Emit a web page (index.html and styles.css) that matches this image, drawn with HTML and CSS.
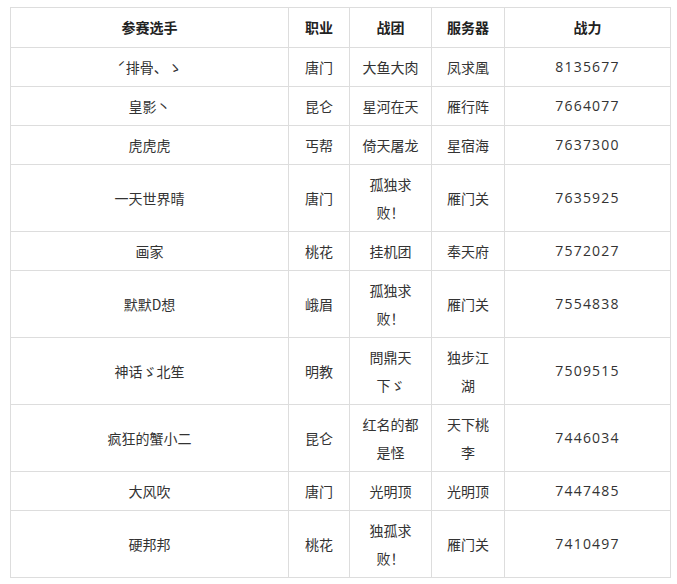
FILE: index.html
```html
<!DOCTYPE html>
<html lang="zh-CN">
<head>
<meta charset="utf-8">
<link rel="stylesheet" href="styles.css">
</head>
<body>
<table class="rank">
  <colgroup>
    <col class="c1"><col class="c2"><col class="c3"><col class="c4"><col class="c5">
  </colgroup>
  <thead>
    <tr><th>参赛选手</th><th>职业</th><th>战团</th><th>服务器</th><th>战力</th></tr>
  </thead>
  <tbody>
    <tr><td>ˊ排骨、ゝ</td><td>唐门</td><td>大鱼大肉</td><td>凤求凰</td><td class="num">8135677</td></tr>
    <tr><td>皇影丶</td><td>昆仑</td><td>星河在天</td><td>雁行阵</td><td class="num">7664077</td></tr>
    <tr><td>虎虎虎</td><td>丐帮</td><td>倚天屠龙</td><td>星宿海</td><td class="num">7637300</td></tr>
    <tr><td>一天世界晴</td><td>唐门</td><td>孤独求败！</td><td>雁门关</td><td class="num">7635925</td></tr>
    <tr><td>画家</td><td>桃花</td><td>挂机团</td><td>奉天府</td><td class="num">7572027</td></tr>
    <tr><td>默默D想</td><td>峨眉</td><td>孤独求败！</td><td>雁门关</td><td class="num">7554838</td></tr>
    <tr><td>神话ゞ北笙</td><td>明教</td><td>問鼎天下ゞ</td><td>独步江湖</td><td class="num">7509515</td></tr>
    <tr><td>疯狂的蟹小二</td><td>昆仑</td><td>红名的都是怪</td><td>天下桃李</td><td class="num">7446034</td></tr>
    <tr><td>大风吹</td><td>唐门</td><td>光明顶</td><td>光明顶</td><td class="num">7447485</td></tr>
    <tr><td>硬邦邦</td><td>桃花</td><td>独孤求败！</td><td>雁门关</td><td class="num">7410497</td></tr>
  </tbody>
</table>
</body>
</html>
```
FILE: styles.css
```css
html, body {
  margin: 0;
  padding: 0;
  background: #ffffff;
}
body {
  padding: 7px 0 0 10px;
  font-family: "Noto Sans CJK SC", "Noto Sans", sans-serif;
  font-size: 14px;
  color: #333333;
}
.rank {
  border-collapse: collapse;
  table-layout: fixed;
  width: 660px;
}
.c1 { width: 278px; }
.c2 { width: 61px; }
.c3 { width: 82px; }
.c4 { width: 73px; }
.c5 { width: 166px; }
.rank th, .rank td {
  border: 1px solid #dddddd;
  text-align: center;
  vertical-align: middle;
  padding: 5px 10px;
  line-height: 28px;
  word-break: normal;
}
.rank th {
  font-weight: bold;
  color: #222222;
  padding: 5px 10px 6px;
}
.rank td.num {
  font-family: "Open Sans", "Noto Sans", sans-serif;
  letter-spacing: 1.2px;
}
```
